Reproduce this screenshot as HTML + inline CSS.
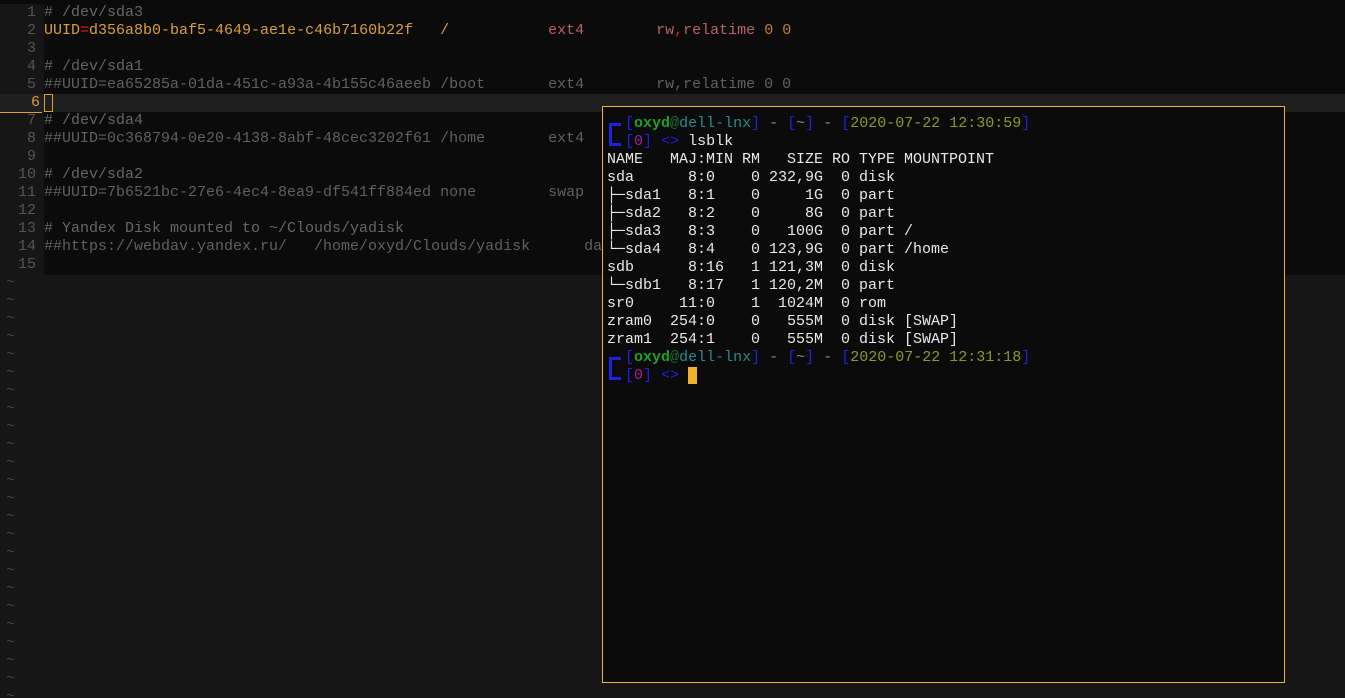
<!DOCTYPE html>
<html><head><meta charset="utf-8"><style>
html,body{margin:0;padding:0;width:1345px;height:698px;overflow:hidden;background:#161616;}
body{font-family:"Liberation Mono","DejaVu Sans Mono",monospace;font-size:15px;position:relative;}
.top{position:absolute;left:0;top:0;width:1345px;height:4px;background:#0a0a0a;}
.ed{position:absolute;left:44px;top:4px;width:1301px;height:271px;background:#0b0b0b;}
.l{position:absolute;left:0;height:18px;line-height:18px;white-space:pre;width:1345px;}
.n{display:inline-block;width:36px;text-align:right;color:#555;margin-right:8px;}
.c{color:#666}.g{color:#606060}
.o{color:#d9a03a}.r{color:#e02020}.p{color:#b86070}.z{color:#c08030}
.cur{background:#1f1f1f}
.t{position:absolute;left:602px;top:106px;width:681px;height:575px;border:1px solid #f0b030;background:#0b0b0b;}
.tl{position:absolute;left:4px;height:18px;line-height:18px;white-space:pre;color:#e8e8e8;}
.b{color:#2020e0}.gr{color:#20a020;font-weight:bold}.dg{color:#1a6a3a}.tc{color:#2a8a8a}.gy{color:#888}.dt{color:#8a9a20}.pu{color:#a020a0}
.tilde{position:absolute;left:6px;color:#444;line-height:18px;white-space:pre;}
</style></head><body>
<div class="top"></div>
<div class="ed"></div>
<div class="l" style="top:4px"><span class="n">1</span><span class="c"># /dev/sda3</span></div>
<div class="l" style="top:22px"><span class="n">2</span><span class="o">UUID</span><span class="r">=</span><span class="o">d356a8b0-baf5-4649-ae1e-c46b7160b22f   /           </span><span class="p">ext4        rw</span><span class="r">,</span><span class="p">relatime</span> <span class="z">0 0</span></div>
<div class="l" style="top:40px"><span class="n">3</span></div>
<div class="l" style="top:58px"><span class="n">4</span><span class="c"># /dev/sda1</span></div>
<div class="l" style="top:76px"><span class="n">5</span><span class="g">##UUID=ea65285a-01da-451c-a93a-4b155c46aeeb /boot       ext4        rw,relatime 0 0</span></div>
<div class="l cur" style="top:94px"><span class="n" style="color:#d9a03a;border-bottom:1px solid #d9a03a;width:42px;margin-right:2px;padding-right:2px;box-sizing:border-box">6</span><span style="display:inline-block;width:7px;height:16px;border:1px solid #d9a03a;vertical-align:top"></span></div>
<div class="l" style="top:112px"><span class="n">7</span><span class="c"># /dev/sda4</span></div>
<div class="l" style="top:130px"><span class="n">8</span><span class="g">##UUID=0c368794-0e20-4138-8abf-48cec3202f61 /home       ext4</span></div>
<div class="l" style="top:148px"><span class="n">9</span></div>
<div class="l" style="top:166px"><span class="n">10</span><span class="c"># /dev/sda2</span></div>
<div class="l" style="top:184px"><span class="n">11</span><span class="g">##UUID=7b6521bc-27e6-4ec4-8ea9-df541ff884ed none        swap</span></div>
<div class="l" style="top:202px"><span class="n">12</span></div>
<div class="l" style="top:220px"><span class="n">13</span><span class="c"># Yandex Disk mounted to ~/Clouds/yadisk</span></div>
<div class="l" style="top:238px"><span class="n">14</span><span class="g">##https://webdav.yandex.ru/   /home/oxyd/Clouds/yadisk      da</span></div>
<div class="l" style="top:256px"><span class="n">15</span></div>
<div class="tilde" style="top:274px">~
~
~
~
~
~
~
~
~
~
~
~
~
~
~
~
~
~
~
~
~
~
~
~</div>
<div class="t">
<div style="position:absolute;left:6px;top:16px;width:12px;height:22px;border-left:3px solid #2020e0;border-top:3px solid #2020e0;box-sizing:border-box"></div>
<div style="position:absolute;left:6px;top:36px;width:12px;height:3px;background:#2020e0"></div>
<div style="position:absolute;left:6px;top:250px;width:12px;height:22px;border-left:3px solid #2020e0;border-top:3px solid #2020e0;box-sizing:border-box"></div>
<div style="position:absolute;left:6px;top:270px;width:12px;height:3px;background:#2020e0"></div>
<div class="tl" style="top:8px">  <span class="b">[</span><span class="gr">oxyd</span><span class="dg">@</span><span class="tc">dell-lnx</span><span class="b">]</span> <span class="gy">-</span> <span class="b">[</span><span class="gy">~</span><span class="b">]</span> <span class="gy">-</span> <span class="b">[</span><span class="dt">2020-07-22 12:30:59</span><span class="b">]</span></div>
<div class="tl" style="top:26px">  <span class="b">[</span><span class="pu">0</span><span class="b">]</span> <span class="b">&lt;&gt;</span> lsblk</div>
<div class="tl" style="top:44px">NAME   MAJ:MIN RM   SIZE RO TYPE MOUNTPOINT</div>
<div class="tl" style="top:62px">sda      8:0    0 232,9G  0 disk</div>
<div class="tl" style="top:80px">├─sda1   8:1    0     1G  0 part</div>
<div class="tl" style="top:98px">├─sda2   8:2    0     8G  0 part</div>
<div class="tl" style="top:116px">├─sda3   8:3    0   100G  0 part /</div>
<div class="tl" style="top:134px">└─sda4   8:4    0 123,9G  0 part /home</div>
<div class="tl" style="top:152px">sdb      8:16   1 121,3M  0 disk</div>
<div class="tl" style="top:170px">└─sdb1   8:17   1 120,2M  0 part</div>
<div class="tl" style="top:188px">sr0     11:0    1  1024M  0 rom</div>
<div class="tl" style="top:206px">zram0  254:0    0   555M  0 disk [SWAP]</div>
<div class="tl" style="top:224px">zram1  254:1    0   555M  0 disk [SWAP]</div>
<div class="tl" style="top:242px">  <span class="b">[</span><span class="gr">oxyd</span><span class="dg">@</span><span class="tc">dell-lnx</span><span class="b">]</span> <span class="gy">-</span> <span class="b">[</span><span class="gy">~</span><span class="b">]</span> <span class="gy">-</span> <span class="b">[</span><span class="dt">2020-07-22 12:31:18</span><span class="b">]</span></div>
<div class="tl" style="top:260px">  <span class="b">[</span><span class="pu">0</span><span class="b">]</span> <span class="b">&lt;&gt;</span> <span style="display:inline-block;width:9px;height:17px;background:#f0b030;vertical-align:top"></span></div>
</div>
</body></html>
